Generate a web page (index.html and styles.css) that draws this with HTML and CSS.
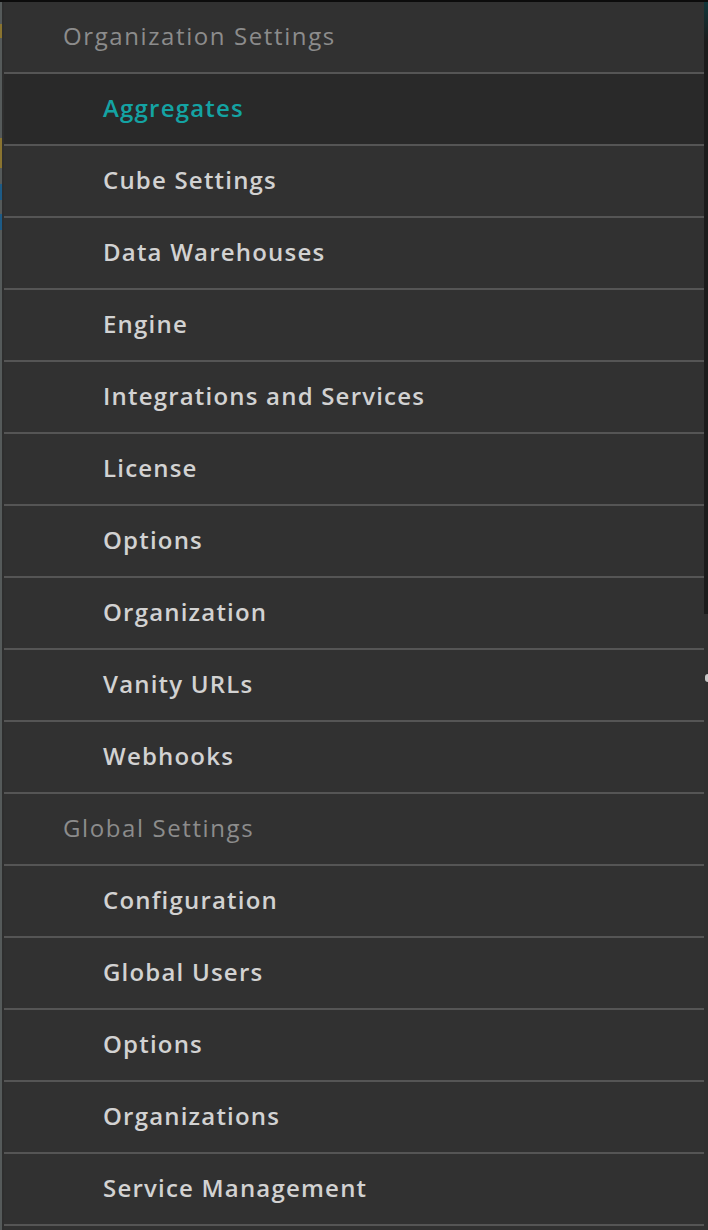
FILE: index.html
```html
<!DOCTYPE html>
<html lang="en">
<head>
  <meta charset="UTF-8" />
  <meta name="viewport" content="width=device-width, initial-scale=1" />
  <title>Settings Menu</title>
  <link rel="stylesheet" href="styles.css">
</head>
<body>

<div class="screen">
  <div class="edge-left">
    <span class="chip gold" style="height: 14px; margin-top: 22px;"></span>
    <span class="chip gold" style="height: 30px; margin-top: 100px;"></span>
    <span class="chip blue" style="height: 16px; margin-top: 16px;"></span>
    <span class="chip blue" style="height: 16px; margin-top: 14px;"></span>
  </div>

  <nav class="settings-menu">
    <div class="menu-header">Organization Settings</div>
    <a class="menu-item active">Aggregates</a>
    <a class="menu-item">Cube Settings</a>
    <a class="menu-item">Data Warehouses</a>
    <a class="menu-item">Engine</a>
    <a class="menu-item">Integrations and Services</a>
    <a class="menu-item">License</a>
    <a class="menu-item">Options</a>
    <a class="menu-item">Organization</a>
    <a class="menu-item">Vanity URLs</a>
    <a class="menu-item">Webhooks</a>

    <div class="menu-header">Global Settings</div>
    <a class="menu-item">Configuration</a>
    <a class="menu-item">Global Users</a>
    <a class="menu-item">Options</a>
    <a class="menu-item">Organizations</a>
    <a class="menu-item">Service Management</a>
  </nav>

  <div class="edge-right">
    <span class="edge-shade"></span>
    <span class="edge-arrow"></span>
  </div>
</div>

</body>
</html>
```

FILE: styles.css
```css
html, body {
  margin: 0;
  height: 100%;
}
body {
  background: #303030;
  font-family: "Open Sans", "Liberation Sans", sans-serif;
  overflow: hidden;
}
.screen {
  display: flex;
  height: 1230px;
  border-top: 2px solid #0c0c0c;
  box-sizing: border-box;
}

/* page content peeking out on the left */
.edge-left {
  width: 2px;
  background: #555a5a;
  display: flex;
  flex-direction: column;
}
.chip {
  display: block;
  width: 2px;
}
.chip.gold {
  background: #8a7430;
}
.chip.blue {
  background: #1d5b86;
}

.settings-menu {
  flex: 1;
  display: flex;
  flex-direction: column;
  background: #313131;
  border-left: 2px solid #2e2e2e;
}
.menu-header,
.menu-item {
  display: flex;
  align-items: center;
  height: 72px;
  padding-bottom: 4px;
  box-sizing: border-box;
  border-bottom: 2px solid #555555;
  font-size: 24px;
  white-space: nowrap;
}
.menu-header {
  padding-left: 59px;
  color: #8c8c8c;
  font-weight: 400;
  letter-spacing: 1.6px;
}
.menu-item {
  padding-left: 99px;
  color: #d2d2d2;
  font-weight: 600;
  letter-spacing: 1.2px;
  text-decoration: none;
  cursor: pointer;
}
.menu-item:hover {
  background: #2b2b2b;
}
.menu-item.active {
  background: #292929;
  color: #14a3a3;
}

/* shadowed page content on the right */
.edge-right {
  width: 4px;
  position: relative;
  background: #303030;
}
.edge-shade {
  display: block;
  height: 612px;
  background: linear-gradient(#12363a 0, #1c1c1c 40px, #1c1c1c 100%);
}
.edge-arrow {
  position: absolute;
  top: 672px;
  left: 1px;
  width: 3px;
  height: 8px;
  border-radius: 3px 0 0 3px;
  background: #c8c8c8;
}
```
